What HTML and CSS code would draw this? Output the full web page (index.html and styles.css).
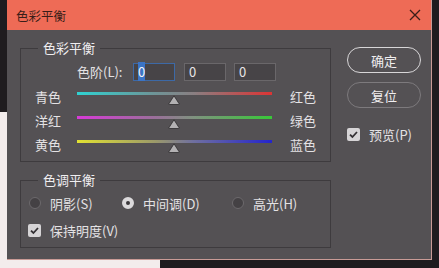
FILE: index.html
```html
<!DOCTYPE html>
<html lang="zh">
<head>
    <meta charset="UTF-8">
    <meta name="viewport" content="width=device-width, initial-scale=1.0">
    <title>色彩平衡</title>
    <link rel="stylesheet" href="styles.css">
</head>
<body>
    <div class="dialog">
        <div class="titlebar">
            <span class="title">色彩平衡</span>
            <span class="close">
                <svg width="12" height="12" viewBox="0 0 12 12"><path d="M1 1 L11 11 M11 1 L1 11" stroke="#3a1e19" stroke-width="1.3" fill="none"/></svg>
            </span>
        </div>

        <div class="content">
            <div class="panels">
                <fieldset class="group">
                    <legend>色彩平衡</legend>
                    <div class="inner balance">
                        <div class="levels">
                            <span class="levels-label">色阶(L):</span>
                            <div class="num focused"><span class="sel">0</span></div>
                            <div class="num">0</div>
                            <div class="num">0</div>
                        </div>

                        <div class="slider-row">
                            <span class="lbl">青色</span>
                            <div class="track"><div class="line cyan-red"></div><span class="thumb"><svg width="12" height="10" viewBox="0 0 12 10"><path d="M6 0.8 L11 8.6 Q11.4 9.5 10.4 9.5 H1.6 Q0.6 9.5 1 8.6 Z" fill="#b3b1b3" stroke="#2b292b" stroke-width="0.8"/></svg></span></div>
                            <span class="lbl right">红色</span>
                        </div>
                        <div class="slider-row">
                            <span class="lbl">洋红</span>
                            <div class="track"><div class="line magenta-green"></div><span class="thumb"><svg width="12" height="10" viewBox="0 0 12 10"><path d="M6 0.8 L11 8.6 Q11.4 9.5 10.4 9.5 H1.6 Q0.6 9.5 1 8.6 Z" fill="#b3b1b3" stroke="#2b292b" stroke-width="0.8"/></svg></span></div>
                            <span class="lbl right">绿色</span>
                        </div>
                        <div class="slider-row">
                            <span class="lbl">黄色</span>
                            <div class="track"><div class="line yellow-blue"></div><span class="thumb"><svg width="12" height="10" viewBox="0 0 12 10"><path d="M6 0.8 L11 8.6 Q11.4 9.5 10.4 9.5 H1.6 Q0.6 9.5 1 8.6 Z" fill="#b3b1b3" stroke="#2b292b" stroke-width="0.8"/></svg></span></div>
                            <span class="lbl right">蓝色</span>
                        </div>
                    </div>
                </fieldset>

                <fieldset class="group">
                    <legend>色调平衡</legend>
                    <div class="inner tone">
                        <div class="radios">
                            <span class="radio-item"><span class="radio"></span>阴影(S)</span>
                            <span class="radio-item"><span class="radio on"></span>中间调(D)</span>
                            <span class="radio-item"><span class="radio"></span>高光(H)</span>
                        </div>
                        <div class="check-row">
                            <span class="checkbox"><svg width="13" height="13" viewBox="0 0 13 13"><path d="M3 6.6 L5.4 9 L10 4" stroke="#333033" stroke-width="1.8" fill="none"/></svg></span>
                            保持明度(V)
                        </div>
                    </div>
                </fieldset>
            </div>

            <div class="actions">
                <button class="btn primary">确定</button>
                <button class="btn">复位</button>
                <div class="check-row preview">
                    <span class="checkbox"><svg width="13" height="13" viewBox="0 0 13 13"><path d="M3 6.6 L5.4 9 L10 4" stroke="#333033" stroke-width="1.8" fill="none"/></svg></span>
                    预览(P)
                </div>
            </div>
        </div>
    </div>
</body>
</html>
```

FILE: styles.css
```css
html, body {
    margin: 0;
    padding: 0;
}
body {
    width: 439px;
    height: 268px;
    overflow: hidden;
    font-family: "Noto Sans CJK SC", "Noto Sans", sans-serif;
    background:
        linear-gradient(#f3ecec, #f3ecec) 0 112px / 7px 156px no-repeat,
        linear-gradient(#f3ecec, #f3ecec) 0 260px / 160px 8px no-repeat,
        #1f1c1f;
}
.dialog {
    margin-left: 7px;
    width: 424px;
    height: 259px;
    background-color: #545154;
    border-right: 1px solid #c99b96;
    border-bottom: 1px solid #c99b96;
    display: flex;
    flex-direction: column;
}
.titlebar {
    height: 30px;
    background-color: #ee6b56;
    display: flex;
    align-items: center;
    justify-content: space-between;
    padding: 0 10px 0 9px;
    color: #3a1e19;
    font-size: 12.5px;
}
.close {
    display: flex;
}
.content {
    display: flex;
    gap: 16px;
    padding: 10px 0 0 13px;
}
.panels {
    width: 311px;
    display: flex;
    flex-direction: column;
    gap: 10px;
}
.group {
    margin: 0;
    padding: 0;
    min-width: 0;
    border: 1px solid #3e3b3e;
}
.group legend {
    margin-left: 17px;
    padding: 0 5px;
    font-size: 13px;
    line-height: 16px;
    color: #f0eef0;
}
.inner {
    color: #e4e2e4;
    font-size: 13px;
}
.balance {
    padding: 7px 0 4px 14px;
}
.levels {
    display: flex;
    align-items: center;
    height: 18px;
    padding-left: 42px;
    margin-bottom: 4px;
}
.levels-label {
    width: 46px;
    margin-right: 10px;
    line-height: 18px;
}
.num {
    width: 42px;
    height: 18px;
    box-sizing: border-box;
    border: 1px solid #6a676a;
    background-color: #474447;
    padding-left: 4px;
    line-height: 16px;
    font-size: 13px;
    color: #e8e6e8;
    margin-right: 9px;
}
.num + .num + .num {
    margin-left: -1px;
}
.num.focused {
    border-color: #3d69a6;
}
.sel {
    background-color: #3b74c6;
    color: #f4f4f4;
}
.slider-row {
    display: grid;
    grid-template-columns: 42px 195px 1fr;
    height: 24px;
}
.lbl {
    line-height: 24px;
}
.lbl.right {
    padding-left: 18px;
}
.track {
    position: relative;
}
.line {
    margin-top: 7px;
    height: 3px;
}
.cyan-red {
    background: linear-gradient(90deg, #2fd2d2, #6f9497 40%, #8a7f82 60%, #dc3434);
}
.magenta-green {
    background: linear-gradient(90deg, #d83ad8, #9a6f9a 40%, #7f927f 60%, #38c838);
}
.yellow-blue {
    background: linear-gradient(90deg, #e2e232, #9c9a6a 40%, #6f6fa0 60%, #2424cc);
}
.thumb {
    position: absolute;
    top: 10px;
    left: 50%;
    margin-left: -7px;
    display: flex;
}
.tone {
    padding: 5px 0 7px 7px;
}
.radios {
    display: grid;
    grid-template-columns: 93px 110px auto;
    height: 20px;
    align-items: center;
}
.radio-item {
    display: flex;
    align-items: center;
    gap: 9px;
    margin-left: 1px;
}
.radio {
    width: 12px;
    height: 12px;
    box-sizing: border-box;
    border-radius: 50%;
    border: 1px solid #6c696c;
    background-color: #444144;
}
.radio.on {
    border: 4px solid #dcdadc;
    background-color: #3a373a;
}
.check-row {
    display: flex;
    align-items: center;
    gap: 9px;
    height: 20px;
    margin-top: 7px;
}
.checkbox {
    width: 13px;
    height: 13px;
    border-radius: 2px;
    background-color: #d6d4d6;
    display: flex;
}
.actions {
    width: 74px;
    display: flex;
    flex-direction: column;
    padding-top: 7px;
}
.btn {
    height: 26px;
    border-radius: 13px;
    border: 1.5px solid #7d7a7d;
    background: transparent;
    color: #f0eef0;
    font-family: inherit;
    font-size: 13px;
    padding: 0;
    margin-bottom: 9px;
}
.btn.primary {
    border-color: #d8d6d8;
}
.preview {
    margin-top: 8px;
    height: 18px;
    color: #e4e2e4;
    font-size: 13px;
}
```
